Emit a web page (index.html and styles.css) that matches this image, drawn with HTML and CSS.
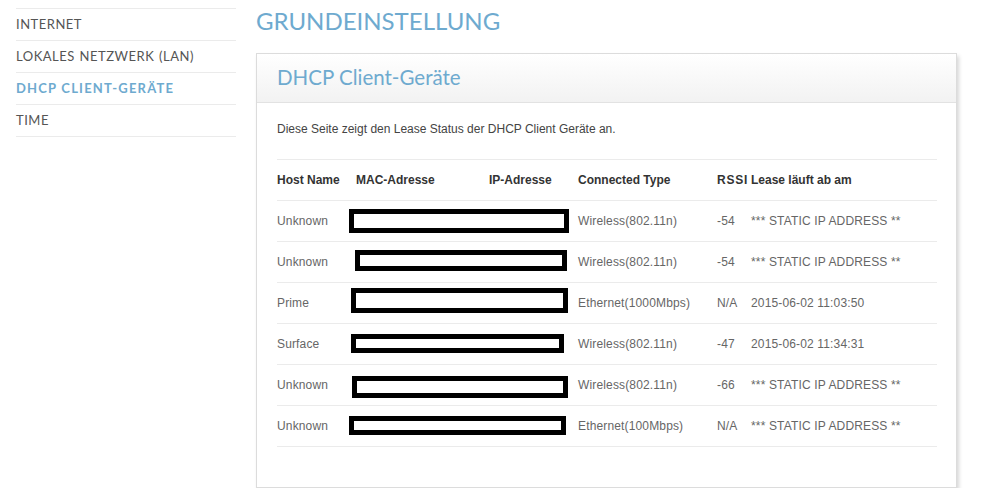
FILE: index.html
```html
<!DOCTYPE html>
<html lang="de">
<head>
<meta charset="utf-8">
<title>DHCP Client-Geräte</title>
<link rel="stylesheet" href="styles.css">
</head>
<body>
<div class="page">
  <nav class="sidebar">
    <a class="nav-item">INTERNET</a>
    <a class="nav-item">LOKALES NETZWERK (LAN)</a>
    <a class="nav-item active">DHCP CLIENT-GERÄTE</a>
    <a class="nav-item">TIME</a>
  </nav>
  <main class="main">
    <h1 class="page-title">GRUNDEINSTELLUNG</h1>
    <section class="panel">
      <div class="panel-head"><h2 class="panel-title">DHCP Client-Geräte</h2></div>
      <div class="panel-body">
        <p class="desc">Diese Seite zeigt den Lease Status der DHCP Client Geräte an.</p>
        <table class="clients">
          <colgroup>
            <col class="c-host"><col class="c-mac"><col class="c-ip"><col class="c-type"><col class="c-rssi"><col class="c-lease">
          </colgroup>
          <thead>
            <tr><th>Host Name</th><th>MAC-Adresse</th><th>IP-Adresse</th><th>Connected Type</th><th class="rssi">RSSI</th><th>Lease läuft ab am</th></tr>
          </thead>
          <tbody>
            <tr><td>Unknown</td><td class="hidden" colspan="2"><span class="redact r1"></span></td><td>Wireless(802.11n)</td><td>-54</td><td>*** STATIC IP ADDRESS **</td></tr>
            <tr><td>Unknown</td><td class="hidden" colspan="2"><span class="redact r2"></span></td><td>Wireless(802.11n)</td><td>-54</td><td>*** STATIC IP ADDRESS **</td></tr>
            <tr><td>Prime</td><td class="hidden" colspan="2"><span class="redact r3"></span></td><td>Ethernet(1000Mbps)</td><td>N/A</td><td>2015-06-02 11:03:50</td></tr>
            <tr><td>Surface</td><td class="hidden" colspan="2"><span class="redact r4"></span></td><td>Wireless(802.11n)</td><td>-47</td><td>2015-06-02 11:34:31</td></tr>
            <tr><td>Unknown</td><td class="hidden" colspan="2"><span class="redact r5"></span></td><td>Wireless(802.11n)</td><td>-66</td><td>*** STATIC IP ADDRESS **</td></tr>
            <tr><td>Unknown</td><td class="hidden" colspan="2"><span class="redact r6"></span></td><td>Ethernet(100Mbps)</td><td>N/A</td><td>*** STATIC IP ADDRESS **</td></tr>
          </tbody>
        </table>
      </div>
    </section>
  </main>
</div>
</body>
</html>
```
FILE: styles.css
```css
html, body {
  margin: 0;
  padding: 0;
  background: #fff;
}
body {
  font-family: "Liberation Sans", Arial, sans-serif;
  color: #444;
}
.page {
  display: flex;
  gap: 20px;
  padding-left: 16px;
}
.sidebar {
  width: 220px;
  margin-top: 8px;
  border-top: 1px solid #ebebeb;
  display: flex;
  flex-direction: column;
  align-self: flex-start;
}
.nav-item {
  display: flex;
  align-items: center;
  height: 31px;
  padding-bottom: 1px;
  box-sizing: border-box;
  height: 32px;
  border-bottom: 1px solid #ebebeb;
  font-family: Lato, "Open Sans", sans-serif;
  font-size: 13px;
  letter-spacing: 0.5px;
  word-spacing: 1px;
  color: #555;
  font-weight: 400;
}
.nav-item.active {
  color: #6eaacf;
  font-weight: 700;
  letter-spacing: 1.2px;
  word-spacing: 0;
}
.main {
  width: 701px;
}
.page-title {
  margin: 6px 0 17px;
  height: 30px;
  line-height: 30px;
  font-family: Lato, "Open Sans", sans-serif;
  font-weight: 400;
  font-size: 24px;
  color: #6eaacf;
}
.panel {
  border: 1px solid #dcdcdc;
  box-shadow: 2px 3px 4px rgba(0, 0, 0, 0.16);
  background: #fff;
}
.panel-head {
  height: 37px;
  padding: 11px 20px 0;
  border-bottom: 1px solid #e2e2e2;
  background: linear-gradient(#ffffff, #f2f2f2);
}
.panel-title {
  margin: 0;
  line-height: 25px;
  font-family: Lato, "Open Sans", sans-serif;
  font-weight: 400;
  font-size: 20.5px;
  color: #6eaacf;
}
.panel-body {
  padding: 19px 20px 40px;
}
.desc {
  margin: 0 0 23px;
  font-size: 12px;
  line-height: 14px;
  color: #444;
}
.clients {
  width: 660px;
  table-layout: fixed;
  border-collapse: collapse;
  font-size: 12px;
}
.c-host { width: 79px; }
.c-mac { width: 133px; }
.c-ip { width: 89px; }
.c-type { width: 139px; }
.c-rssi { width: 34px; }
.c-lease { width: 186px; }
.clients th {
  height: 40px;
  padding: 0;
  text-align: left;
  font-weight: 700;
  color: #333;
  border-top: 1px solid #ebebeb;
  border-bottom: 1px solid #ebebeb;
}
.clients th.rssi {
  letter-spacing: 0.8px;
}
.clients td {
  height: 40px;
  padding: 0;
  color: #666;
  border-bottom: 1px solid #ebebeb;
  white-space: nowrap;
  letter-spacing: 0.15px;
}
.clients td.hidden {
  position: relative;
}
.redact {
  position: absolute;
  box-sizing: border-box;
  border: 5px solid #000;
  background: #fff;
}
.r1 { left: -7px; top: 8px; width: 220px; height: 24px; }
.r2 { left: -1px; top: 8px; width: 212px; height: 21px; }
.r3 { left: -5px; top: 5px; width: 217px; height: 25px; }
.r4 { left: -5px; top: 10px; width: 213px; height: 19px; }
.r5 { left: -4px; top: 11px; width: 216px; height: 22px; }
.r6 { left: -7px; top: 10px; width: 217px; height: 19px; }
```
